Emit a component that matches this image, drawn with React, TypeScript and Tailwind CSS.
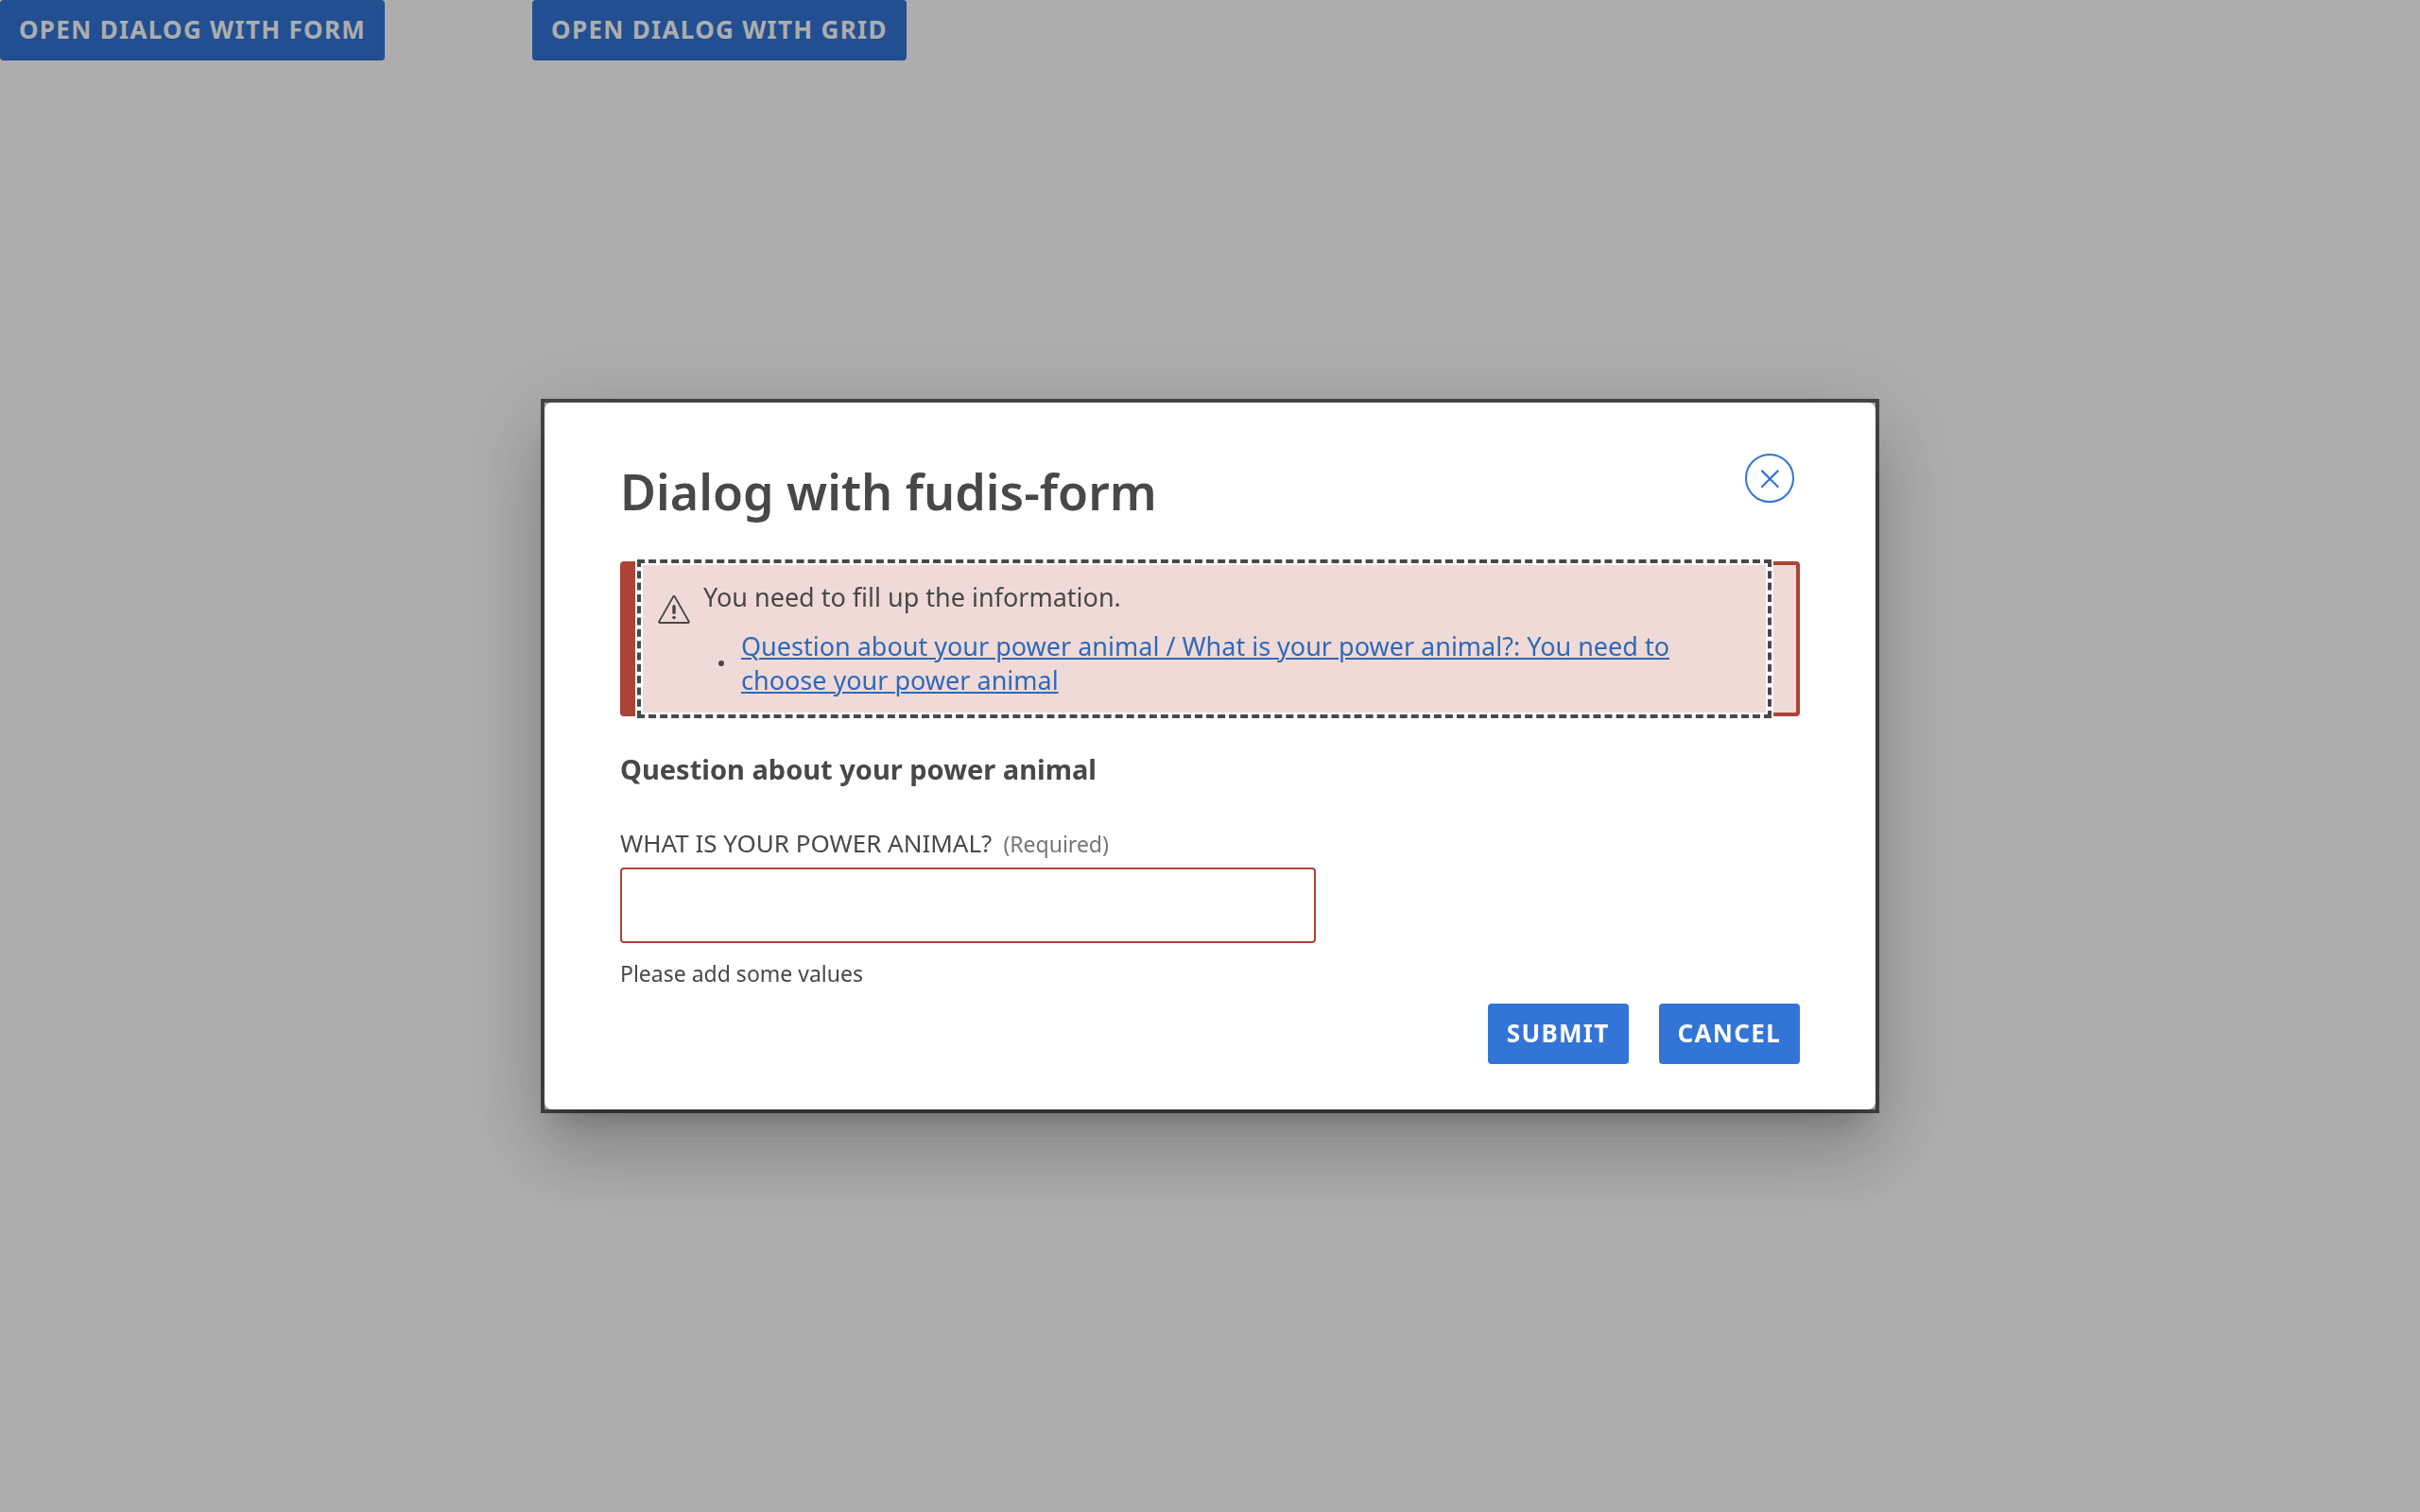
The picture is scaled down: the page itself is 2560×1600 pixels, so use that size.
import type { ButtonHTMLAttributes } from 'react';

function Button({ children, ...rest }: ButtonHTMLAttributes<HTMLButtonElement>) {
  return (
    <button
      type="button"
      {...rest}
      className="flex h-16 items-center rounded bg-[#3375d6] px-5 pb-0.5 text-[26px] font-bold tracking-wider whitespace-nowrap text-white uppercase"
    >
      {children}
    </button>
  );
}

function CloseIcon() {
  return (
    <svg viewBox="0 0 20 20" className="size-5" fill="none" stroke="currentColor" strokeWidth="2.2" strokeLinecap="round" aria-hidden="true">
      <path d="M2 2.4 18.6 19M18.6 2.4 2 19" />
    </svg>
  );
}

function AlertIcon() {
  return (
    <svg viewBox="0 0 34 30" className="h-[30px] w-[34px] shrink-0" fill="none" stroke="currentColor" aria-hidden="true">
      <path d="M16.3 1.2a.8.8 0 0 1 1.4 0L32.9 28a.7.7 0 0 1-.6 1H1.7a.7.7 0 0 1-.6-1Z" strokeWidth="1.8" strokeLinejoin="round" />
      <path d="M17 11.8v6.4" strokeWidth="3.4" strokeLinecap="round" />
      <circle cx="17" cy="23.5" r="1.8" fill="currentColor" stroke="none" />
    </svg>
  );
}

function ErrorSummary() {
  return (
    <div className="mt-[34px] rounded border-4 border-l-16 border-[#ab4437] bg-[#efdad8]">
      <div
        role="alert"
        className="mr-8 ml-2 flex gap-3.5 py-4 pr-10 pl-4 text-[27px] leading-9 shadow-[0_0_0_8px_#fff] outline-4 outline-offset-2 outline-[#484848] outline-dashed"
      >
        <div className="pt-4">
          <AlertIcon />
        </div>
        <div>
          <p>You need to fill up the information.</p>
          <ul className="mt-4 pl-4">
            <li className="flex items-center gap-[18px]">
              <span className="size-1.5 shrink-0 rounded-full bg-[#484848]" aria-hidden="true" />
              <a href="#power-animal" className="text-[#2f69b8] underline decoration-2 underline-offset-2">
                Question about your power animal / What is your power animal?: You need to choose your power animal
              </a>
            </li>
          </ul>
        </div>
      </div>
    </div>
  );
}

function Dialog() {
  return (
    <div role="dialog" aria-modal="true" aria-labelledby="dialog-title" className="w-full max-w-[1416px] border-4 border-[#484848]">
      <div className="rounded-lg bg-white px-20 pt-[54px] pb-12 shadow-[0_22px_30px_-14px_rgba(0,0,0,0.2),0_48px_76px_6px_rgba(0,0,0,0.14),0_18px_92px_16px_rgba(0,0,0,0.12)]">
        <header className="flex items-start justify-between pr-1.5">
          <h1 id="dialog-title" className="text-[52px] leading-[80px] font-semibold">
            Dialog with fudis-form
          </h1>
          <button
            type="button"
            aria-label="Close dialog"
            className="flex size-[52px] items-center justify-center rounded-full border-2 border-[#3375d6] text-[#3375d6]"
          >
            <CloseIcon />
          </button>
        </header>
        <form>
          <ErrorSummary />
          <h2 className="mt-9 text-[29px] leading-10 font-bold">Question about your power animal</h2>
          <div className="mt-10 flex items-baseline gap-3">
            <label htmlFor="power-animal" className="text-[26px] leading-9 uppercase">
              What is your power animal?
            </label>
            <span id="power-animal-required" className="text-[23px] leading-8 text-[#757575]">
              (Required)
            </span>
          </div>
          <input
            id="power-animal"
            type="text"
            required
            aria-invalid="true"
            aria-describedby="power-animal-required power-animal-help"
            className="mt-2 block h-20 w-full max-w-[736px] rounded border-2 border-[#ab4437] bg-white px-5 text-[27px] outline-none"
          />
          <p id="power-animal-help" className="mt-4 text-[23px] leading-8">
            Please add some values
          </p>
          <div className="mt-4 flex justify-end gap-8">
            <Button>Submit</Button>
            <Button>Cancel</Button>
          </div>
        </form>
      </div>
    </div>
  );
}

export default function App() {
  return (
    <div className="min-h-screen bg-white font-['Noto_Sans',sans-serif] text-[#484848]">
      <main className="flex gap-[156px]">
        <Button>Open dialog with form</Button>
        <Button>Open dialog with grid</Button>
      </main>
      <div className="fixed inset-0 flex items-center justify-center bg-black/32">
        <Dialog />
      </div>
    </div>
  );
}
